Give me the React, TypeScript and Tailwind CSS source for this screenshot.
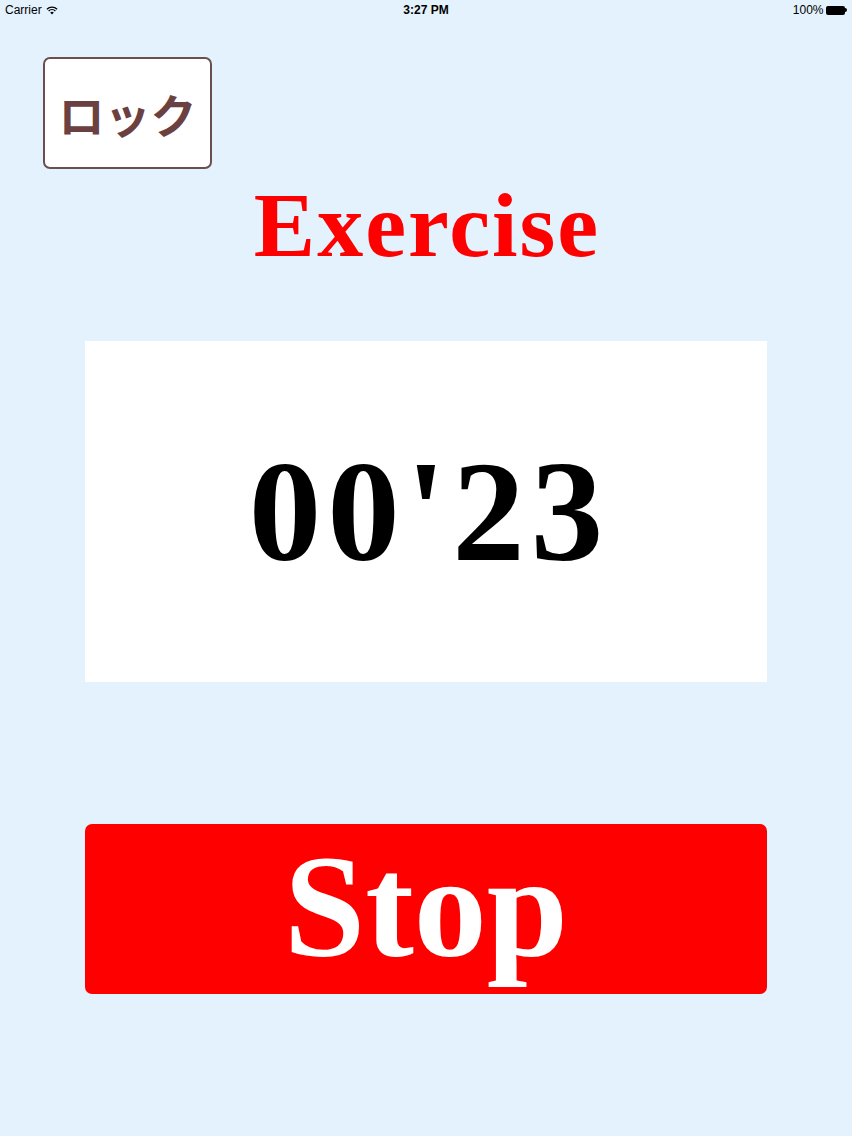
import React from "react";

const serif = { fontFamily: '"Liberation Serif", "Noto Sans CJK JP", serif' };

const StatusBar = () => {
  return (
    <div className="h-5 flex items-center justify-between px-[5px] text-[12px] text-black" style={{ fontFamily: '"Liberation Sans", sans-serif' }}>
      <div className="flex items-center gap-1 w-[120px]">
        <span>Carrier</span>
        <svg width="12" height="9" viewBox="0 0 12 9">
          <path d="M6 8.5 L4.2 6.6 A2.6 2.6 0 0 1 7.8 6.6 Z" fill="#000" />
          <path d="M2.6 5 A4.9 4.9 0 0 1 9.4 5" stroke="#000" strokeWidth="1.3" fill="none" />
          <path d="M0.9 3.2 A7.4 7.4 0 0 1 11.1 3.2" stroke="#000" strokeWidth="1.3" fill="none" />
        </svg>
      </div>
      <div className="font-bold">3:27 PM</div>
      <div className="flex items-center justify-end gap-[3px] w-[120px]">
        <span>100%</span>
        <div className="flex items-center">
          <div className="w-[19px] h-[9px] bg-black rounded-[2px]" />
          <div className="w-[1.5px] h-[4px] bg-black rounded-r-sm" />
        </div>
      </div>
    </div>
  );
};

export default function App() {
  return (
    <div className="w-[852px] h-[1136px] bg-[#e3f2fd] flex flex-col">
      <StatusBar />
      <div className="pl-[43px] pt-[37px]">
        <button className="w-[169px] h-[112px] bg-white border-2 border-[#6b4e4e] rounded-[7px] flex items-center justify-center text-[46px] font-bold text-[#6b4040] leading-none" style={{ fontFamily: '"Noto Sans CJK JP", sans-serif' }}>
          ロック
        </button>
      </div>
      <h1 className="mt-[10px] text-center text-[92px] font-bold leading-none tracking-[2px] pl-[2px] text-[#ff0000]" style={serif}>
        Exercise
      </h1>
      <div className="mt-[70px] mx-[85px] h-[341px] bg-white flex items-center justify-center">
        <span className="text-[145px] font-bold leading-none tracking-[6px] pl-[6px] text-black" style={serif}>
          00'23
        </span>
      </div>
      <div className="mt-[142px] mx-[85px] h-[170px] bg-[#ff0000] rounded-[7px] flex items-center justify-center">
        <span className="text-[146px] font-bold leading-none text-white -mt-[4px]" style={serif}>
          Stop
        </span>
      </div>
    </div>
  );
}
